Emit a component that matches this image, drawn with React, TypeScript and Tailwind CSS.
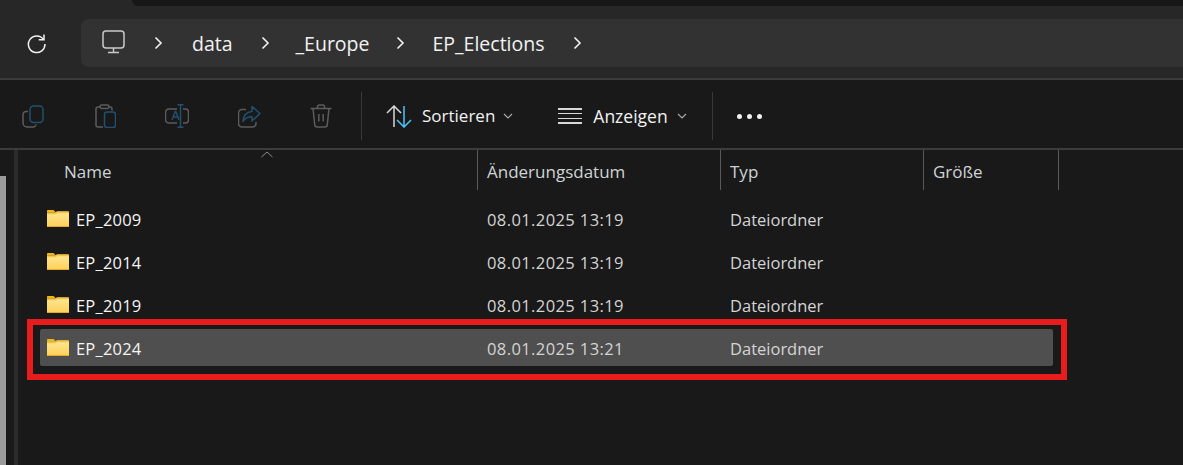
const rows = [
  { name: "EP_2009", date: "08.01.2025 13:19" },
  { name: "EP_2014", date: "08.01.2025 13:19" },
  { name: "EP_2019", date: "08.01.2025 13:19" },
  { name: "EP_2024", date: "08.01.2025 13:21", selected: true },
];

function Chevron({ className = "" }: { className?: string }) {
  return (
    <svg width="9" height="14" viewBox="0 0 9 14" fill="none" stroke="#f2f2f2" strokeWidth="1.6" className={className}>
      <path d="M1.5 1.5 7 7l-5.5 5.5" />
    </svg>
  );
}

function SmallChevron({ className = "" }: { className?: string }) {
  return (
    <svg width="10" height="6" viewBox="0 0 10 6" fill="none" stroke="#a8a8a8" strokeWidth="1.2" className={className}>
      <path d="M1 1l4 4 4-4" />
    </svg>
  );
}

function FolderIcon() {
  return (
    <svg width="22" height="17" viewBox="0 0 22 17" className="shrink-0">
      <defs>
        <linearGradient id="folderBody" x1="0" y1="0" x2="0" y2="1">
          <stop offset="0" stopColor="#ffe796" />
          <stop offset="1" stopColor="#fdd058" />
        </linearGradient>
      </defs>
      <path d="M0 1C0 .4.4 0 1 0h5c.4 0 .7.1 1 .4L8.500 2H0z" fill="#f5b50f" />
      <path d="M0 2.500h8.500L10 1.500h11c.6 0 1 .4 1 1V16c0 .6-.4 1-1 1H1c-.6 0-1-.4-1-1z" fill="url(#folderBody)" />
      <path d="M0 2.500h8.500L10 1.500h11c.6 0 1 .4 1 1v.7H10.200l-1.500 1H0z" fill="#f7c63c" />
      <path d="M0 16h22c0 .6-.4 1-1 1H1c-.6 0-1-.4-1-1z" fill="#e9a928" />
    </svg>
  );
}

function CopyIcon() {
  return (
    <svg width="22" height="23" viewBox="0 0 22 23" fill="none" strokeWidth="1.5">
      <path d="M6 6.500H4a3 3 0 0 0-3 3V18a4 4 0 0 0 4 4h6a3 3 0 0 0 3-2.500" stroke="#5c5c5c" />
      <rect x="8" y="1" width="13" height="16.500" rx="3.500" stroke="#22506e" />
    </svg>
  );
}

function PasteIcon() {
  return (
    <svg width="21" height="24" viewBox="0 0 21 24" fill="none" strokeWidth="1.5">
      <path d="M5 3H3a2 2 0 0 0-2 2v16a2 2 0 0 0 2 2h5M14 3h1a2 2 0 0 1 2 2v1.500" stroke="#5c5c5c" />
      <rect x="5" y="1" width="9" height="3.500" rx="1.700" stroke="#5c5c5c" />
      <rect x="9.500" y="8" width="11" height="15.500" rx="2.500" stroke="#22506e" />
    </svg>
  );
}

function RenameIcon() {
  return (
    <svg width="24" height="24" viewBox="0 0 24 24" fill="none" strokeWidth="1.500">
      <path d="M12 5H4a3.500 3.500 0 0 0-3.500 3.500v7A3.500 3.500 0 0 0 4 19h8M18 5h2.500A3 3 0 0 1 23.500 8v8a3 3 0 0 1-3 3H18" stroke="#5c5c5c" />
      <path d="M7 16l3.300-8.500h.6L14 16M8.200 13h5" stroke="#22506e" />
      <path d="M12.500.800h6M15.500.800v22.400M12.500 23.200h6" stroke="#22506e" />
    </svg>
  );
}

function ShareIcon() {
  return (
    <svg width="23" height="23" viewBox="0 0 23 23" fill="none" strokeWidth="1.500">
      <path d="M8 4.500H4a3.500 3.500 0 0 0-3.500 3.500v10.500A3.500 3.500 0 0 0 4 22h10.500a3.500 3.500 0 0 0 3.500-3.500v-1.500" stroke="#5c5c5c" />
      <path d="M14 1.500l8 7-8 7.500v-4.200c-4 0-7 1.200-9 4.700.2-6 3.500-9.500 9-10z" stroke="#22506e" strokeLinejoin="round" />
    </svg>
  );
}

function TrashIcon() {
  return (
    <svg width="22" height="24" viewBox="0 0 22 24" fill="none" stroke="#5c5c5c" strokeWidth="1.500">
      <path d="M.500 4.500h21M7.500 4.500V3a2 2 0 0 1 2-2h3a2 2 0 0 1 2 2v1.500" />
      <path d="M3 4.500l1.700 16a2.500 2.500 0 0 0 2.500 2.500h7.600a2.500 2.500 0 0 0 2.500-2.500l1.700-16" />
      <path d="M8.800 10v7.500M13.200 10v7.500" />
    </svg>
  );
}

export default function App() {
  return (
    <div className="relative h-[465px] w-[1183px] overflow-hidden bg-[#191919] font-['Open_Sans','Noto_Sans',sans-serif] text-[#f2f2f2]">
      {/* address bar */}
      <div className="h-[78px] bg-[#272727]">
        <div className="ml-[132px] h-[6px] rounded-bl-[6px] bg-[#171717]" />
        <div className="flex h-[72px] items-start">
          <div className="flex w-[81px] justify-center pt-[28px] pr-[9px]">
            <svg width="19" height="20" viewBox="0 0 19 20" fill="none" stroke="#f2f2f2" strokeWidth="1.500">
              <path d="M16.500 5.500A8.300 8.300 0 1 0 18 10" />
              <path d="M17 .500v5.300h-5.300" />
            </svg>
          </div>
          <div className="mt-[13px] flex h-[48px] flex-1 items-center rounded-l-[8px] bg-[#323232] text-[19.500px]">
            <svg width="24" height="24" viewBox="0 0 24 24" fill="none" stroke="#c9c9c9" strokeWidth="1.500" className="mb-[2px] ml-[21px]">
              <rect x="1" y="1" width="21" height="17" rx="3" />
              <path d="M11.500 18v4M6 22.500h11" />
            </svg>
            <Chevron className="ml-[28px]" />
            <span className="mt-[2px] ml-[29px]">data</span>
            <Chevron className="ml-[28px]" />
            <span className="mt-[2px] ml-[26px]">_Europe</span>
            <Chevron className="ml-[27px]" />
            <span className="mt-[2px] ml-[27px]">EP_Elections</span>
            <Chevron className="ml-[28px]" />
          </div>
        </div>
      </div>
      <div className="h-[2px] bg-[#3c3c3c]" />

      {/* toolbar */}
      <div className="flex h-[68px] items-center pt-[4px]">
        <div className="flex gap-[6px]">
          {[CopyIcon, PasteIcon, RenameIcon, ShareIcon, TrashIcon].map((Icon, i) => (
            <div key={i} className="flex h-[30px] w-[66px] items-center justify-center">
              <Icon />
            </div>
          ))}
        </div>
        <div className="ml-[7px] h-[48px] w-[1px] bg-[#383838]" />
        <svg width="26" height="23" viewBox="0 0 26 23" fill="none" strokeWidth="1.500" className="ml-[24px]">
          <path d="M8 22V1.500M1 8l7-7 7 7" stroke="#d8d8d8" />
          <path d="M18 1v20.500M11 15l7 7 7-7" stroke="#4cc2ff" />
        </svg>
        <span className="ml-[10px] text-[17px]">Sortieren</span>
        <SmallChevron className="ml-[8px]" />
        <div className="ml-[45px] flex h-[16px] w-[24px] flex-col justify-between">
          <div className="h-[1.500px] bg-[#d8d8d8]" />
          <div className="h-[1.500px] bg-[#d8d8d8]" />
          <div className="h-[1.500px] bg-[#d8d8d8]" />
          <div className="h-[1.500px] bg-[#d8d8d8]" />
        </div>
        <span className="ml-[11px] text-[17.500px]">Anzeigen</span>
        <SmallChevron className="ml-[9px]" />
        <div className="ml-[25px] h-[48px] w-[1px] bg-[#383838]" />
        <div className="ml-[24px] flex gap-[5px]">
          <div className="size-[5px] rounded-full bg-[#f2f2f2]" />
          <div className="size-[5px] rounded-full bg-[#f2f2f2]" />
          <div className="size-[5px] rounded-full bg-[#f2f2f2]" />
        </div>
      </div>
      <div className="h-[2px] bg-[#3c3c3c]" />

      <div className="flex h-[315px]">
        {/* nav pane sliver */}
        <div className="mt-[26px] h-[289px] w-[6px] bg-[#9b9b9b]" />
        <div className="ml-[8px] h-full w-[4px] bg-[#2b2b2b]" />

        <div className="flex-1">
          {/* column headers */}
          <div className="relative grid h-[40px] grid-cols-[460px_243px_203px_135px] text-[17px] text-[#cfd3d6]">
            <div className="border-r border-[#5a5a5a] pt-[9px] pl-[46px]">Name</div>
            <div className="border-r border-[#5a5a5a] pt-[9px] pl-[9px]">Änderungsdatum</div>
            <div className="border-r border-[#5a5a5a] pt-[9px] pl-[9px]">Typ</div>
            <div className="border-r border-[#5a5a5a] pt-[9px] pl-[9px]">Größe</div>
            <svg width="12" height="7" viewBox="0 0 12 7" fill="none" stroke="#8c8c8c" className="absolute top-[1px] left-[243px]">
              <path d="M.500 6 6 1l5.500 5" />
            </svg>
          </div>

          {/* file rows */}
          <div className="mt-[10px] ml-[22px] flex w-[1013px] flex-col gap-[6px]">
            {rows.map((row) => (
              <div
                key={row.name}
                className={`grid h-[37px] grid-cols-[437px_243px_1fr] items-center rounded-[2px] text-[16.500px] ${
                  row.selected ? "bg-[#4f4f4f]" : ""
                }`}
              >
                <div className="flex items-center pl-[7px]">
                  <FolderIcon />
                  <span className="mt-[3px] ml-[7px] tracking-[0.2px] text-[#f5f5f5]">{row.name}</span>
                </div>
                <div className="mt-[3px] pl-[10px] tracking-[0.4px] text-[#d4d4d4]">{row.date}</div>
                <div className="mt-[3px] pl-[10px] text-[#d4d4d4]">Dateiordner</div>
              </div>
            ))}
          </div>
        </div>
      </div>

      {/* annotation */}
      <div className="absolute top-[319px] left-[27px] h-[61px] w-[1040px] border-[6px] border-[#e81c1c]" />
    </div>
  );
}
